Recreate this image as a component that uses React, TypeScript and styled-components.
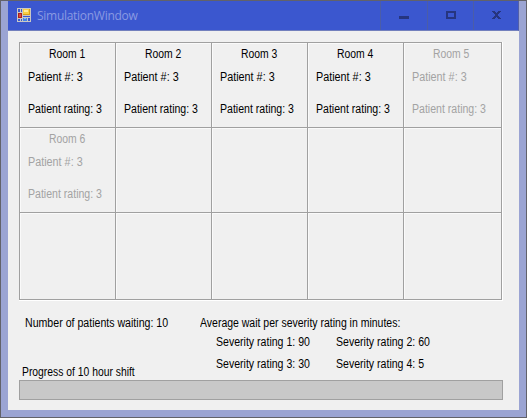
import React from 'react';
import styled, { createGlobalStyle } from 'styled-components';

const GlobalStyle = createGlobalStyle`
  * { box-sizing: border-box; }
  body { margin: 0; background: #9ba4d3; }
`;

const WindowFrame = styled.div`
  width: 527px;
  height: 418px;
  padding: 0 7px 7px;
  border: 1px solid #62626a;
  background: #9ba4d3;
  overflow: hidden;
  font-family: "Liberation Sans", Arial, sans-serif;
`;

const TitleBar = styled.header`
  display: flex;
  height: 30px;
  background: #3b57cf;
  border-bottom: 1px solid #7380bd;
  border-right: 1px solid #5360a8;
`;

const AppIcon = styled.svg`
  display: block;
  margin: 7px 0 0 9px;
  flex: none;
`;

const Title = styled.h1`
  flex: 1;
  margin: 6px 0 0 6px;
  font: 400 12px/18px "Open Sans", "Noto Sans", sans-serif;
  letter-spacing: -0.28px;
  color: #8a9ae2;
`;

const CaptionButton = styled.button<{ $width: number }>`
  width: ${p => p.$width}px;
  height: 29px;
  padding: 0;
  border: 0;
  border-left: 1px solid #4b5da8;
  background: transparent;
`;

const Glyph = styled.svg`
  display: block;
`;

const Client = styled.main`
  height: 379px;
  padding: 11px 16px 0 11px;
  background: #f0f0f0;
`;

const RoomGrid = styled.section`
  display: grid;
  grid-template-columns: repeat(4, 96px) 98px;
  grid-template-rows: 85px 85px 87px;
  width: 484px;
  height: 259px;
  border-right: 1px solid #fff;
  border-bottom: 1px solid #fff;
  box-shadow: inset -1px -1px #a0a0a0;
`;

const RoomCell = styled.article<{ $disabled?: boolean }>`
  padding: 4px 0 0 8px;
  border-top: 1px solid #a0a0a0;
  border-left: 1px solid #a0a0a0;
  box-shadow: inset 1px 1px #fafafa;
  color: ${p => (p.$disabled ? '#a3a3a3' : '#000')};
`;

const Label = styled.div<{ $scale?: number; $indent?: number; $gap?: number }>`
  width: max-content;
  height: 14px;
  margin-left: ${p => p.$indent ?? 0}px;
  margin-top: ${p => p.$gap ?? 0}px;
  font-size: 12px;
  line-height: 14px;
  white-space: nowrap;
  transform: scaleX(${p => p.$scale ?? 0.88});
  transform-origin: left;
`;

const Footer = styled.section`
  display: grid;
  grid-template-columns: 178px 1fr;
  height: 79px;
  padding-top: 15px;
`;

const Summary = styled.div`
  display: flex;
  flex-direction: column;
  padding-left: 3px;
`;

const Averages = styled.div`
  padding-left: 3px;
`;

const SeverityGrid = styled.div`
  display: grid;
  grid-template-columns: 120px 120px;
  row-gap: 8px;
  padding: 5px 0 0 16px;
`;

const ProgressTrack = styled.div`
  width: 484px;
  height: 20px;
  border: 1px solid #a0a0a0;
  background: #c8c8c8;
`;

const rooms = [1, 2, 3, 4, 5, 6];
const severities = [90, 60, 30, 5];

function Room({ id }: { id: number }) {
  return (
    <RoomCell $disabled={id > 4}>
      <Label $indent={21} $scale={0.865}>Room {id}</Label>
      <Label $gap={9} $scale={0.9}>Patient #: 3</Label>
      <Label $gap={18}>Patient rating: 3</Label>
    </RoomCell>
  );
}

export default function App() {
  return (
    <>
      <GlobalStyle />
      <WindowFrame>
        <TitleBar>
          <AppIcon width="14" height="14" viewBox="0 0 14 14" shapeRendering="crispEdges">
            <path fill="#c9c8c4" d="M0 0h14v14H0z" />
            <path fill="#3b57cf" d="M1 1h2v3H1zM4 1h1v3H4zM1 11h2v2H1zM4 11h1v2H4zM6 8h7v1H6zM11 10h2v3h-2z" />
            <path fill="#a82020" d="M1 5h4v5H1z" />
            <path fill="#dd4a3c" d="M2 6h2v3H2z" />
            <path fill="#d9a01a" d="M6 1h7v6H6z" />
            <path fill="#f8cf45" d="M6 1h6v5H6z" />
            <path fill="#ffeb9c" d="M7 2h4v2H7z" />
            <path fill="#4386e8" d="M6 10h4v3H6z" />
            <path fill="#86b9ff" d="M7 10h2v1H7z" />
          </AppIcon>
          <Title>SimulationWindow</Title>
          <CaptionButton $width={47} aria-label="Minimize">
            <Glyph width="46" height="29" shapeRendering="crispEdges">
              <path fill="#26357f" d="M18 15h10v3H18z" />
            </Glyph>
          </CaptionButton>
          <CaptionButton $width={46} aria-label="Maximize">
            <Glyph width="45" height="29" shapeRendering="crispEdges">
              <path fill="#26357f" fillRule="evenodd" d="M18 10h10v8H18zM20 12v4h6v-4z" />
            </Glyph>
          </CaptionButton>
          <CaptionButton $width={45} aria-label="Close">
            <Glyph width="44" height="29" shapeRendering="crispEdges">
              <path
                fill="#26357f"
                d="M18 10h3v1h-3zM24 10h3v1h-3zM19 11h3v1h-3zM23 11h3v1h-3zM20 12h5v1h-5zM21 13h3v2h-3zM20 15h5v1h-5zM19 16h3v1h-3zM23 16h3v1h-3zM18 17h3v1h-3zM24 17h3v1h-3z"
              />
            </Glyph>
          </CaptionButton>
        </TitleBar>
        <Client>
          <RoomGrid>
            {rooms.map(id => <Room key={id} id={id} />)}
            {Array.from({ length: 9 }, (_, i) => <RoomCell key={i} />)}
          </RoomGrid>
          <Footer>
            <Summary>
              <Label $indent={3} $scale={0.883}>Number of patients waiting: 10</Label>
              <Label $gap={35} $scale={0.862}>Progress of 10 hour shift</Label>
            </Summary>
            <Averages>
              <Label $scale={0.874}>Average wait per severity rating in minutes:</Label>
              <SeverityGrid>
                {severities.map((value, i) => (
                  <Label key={i}>Severity rating {i + 1}: {value}</Label>
                ))}
              </SeverityGrid>
            </Averages>
          </Footer>
          <ProgressTrack role="progressbar" aria-valuenow={0} />
        </Client>
      </WindowFrame>
    </>
  );
}
